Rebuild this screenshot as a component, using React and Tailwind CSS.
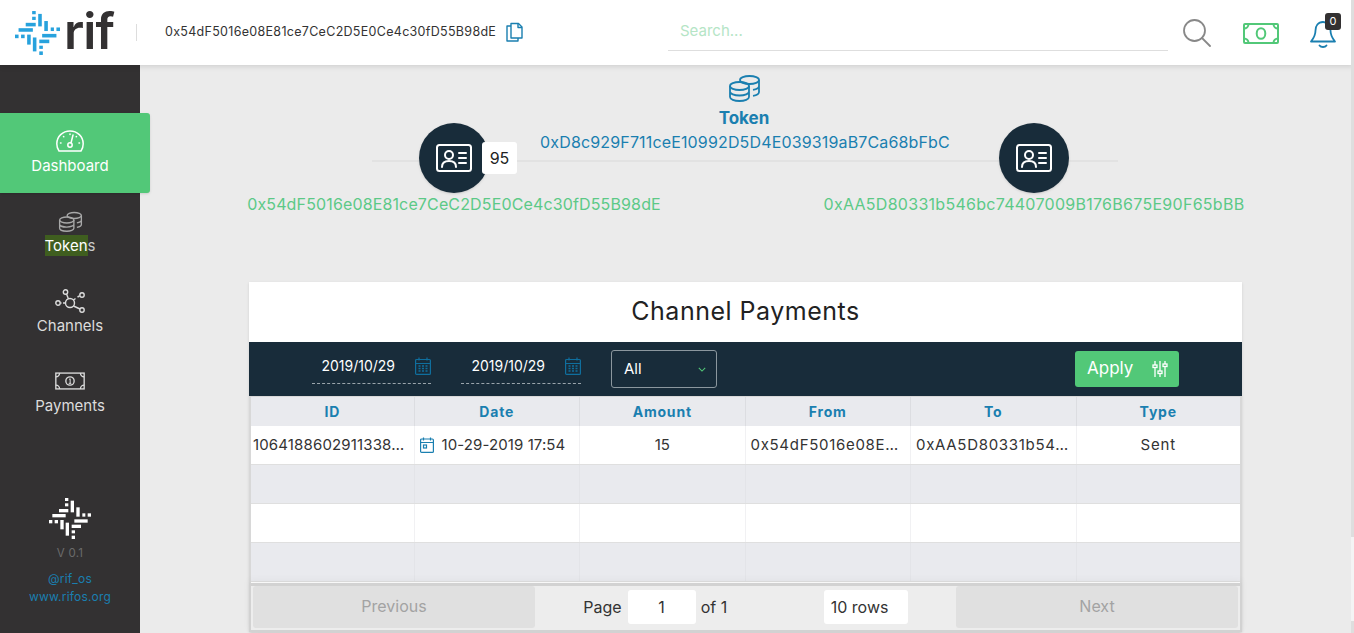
const ADDR_A = "0x54dF5016e08E81ce7CeC2D5E0Ce4c30fD55B98dE";
const ADDR_B = "0xAA5D80331b546bc74407009B176B675E90F65bBB";
const TOKEN = "0xD8c929F711ceE10992D5D4E039319aB7Ca68bFbC";

function RifMark({ className }) {
  const bars = [
    [195, 52, 10, 9], [195, 68, 10, 9], [177, 85, 28, 10], [212, 60, 10, 35],
    [229, 80, 10, 28], [247, 98, 9, 10], [263, 98, 10, 10], [157, 100, 40, 10],
    [223, 116, 40, 10], [147, 118, 10, 10], [164, 118, 10, 10], [181, 118, 10, 28],
    [197, 126, 10, 39], [215, 132, 28, 10], [215, 149, 10, 9], [215, 165, 10, 10],
  ];
  return (
    <svg viewBox="147 52 126 123" className={className} fill="currentColor">
      {bars.map(([x, y, w, h]) => (
        <rect key={`${x}-${y}`} x={x} y={y} width={w} height={h} />
      ))}
    </svg>
  );
}

function IdCard() {
  return (
    <svg viewBox="0 0 36 28" className="w-[36px] h-[28px]" fill="none" stroke="#fff" strokeWidth="2" strokeLinecap="round">
      <rect x="1" y="1" width="34" height="26" rx="2.5" />
      <circle cx="13" cy="11" r="4" />
      <path d="M6 23c0-4 3-6 7-6s7 2 7 6" />
      <path d="M23 9h7M23 14h7M23 19h7" />
    </svg>
  );
}

function Coins({ className }) {
  return (
    <svg viewBox="0 0 32 28" className={className} fill="none" stroke="currentColor" strokeWidth="1.8">
      <ellipse cx="21" cy="6" rx="9.5" ry="4" />
      <path d="M30.5 6v12c0 1.8-2.5 3.2-6 3.8M30.5 12c0 1.8-2.5 3.2-6 3.8" />
      <ellipse cx="11" cy="12" rx="9.5" ry="4" />
      <path d="M1.5 12v11c0 2.2 4.2 4 9.5 4s9.5-1.8 9.5-4V12M1.5 17.5c0 2.2 4.2 4 9.5 4s9.5-1.8 9.5-4" />
    </svg>
  );
}

function Gauge({ className }) {
  return (
    <svg viewBox="0 0 28 22" className={className} fill="none" stroke="currentColor" strokeWidth="1.5" strokeLinecap="round">
      <path d="M3 21h22c1.5-2 2.2-4.500 2.2-7.200C27.200 6.500 21.300 1 14 1S.8 6.500.8 13.800C.8 16.500 1.500 19 3 21z" />
      <circle cx="14" cy="15" r="2.2" />
      <path d="M15 13l2-8M14 4v.5M7.500 6.500l.3.3M20.500 6.500l-.3.3M4.500 13h.5M23 13h.5" />
    </svg>
  );
}

function Network({ className }) {
  return (
    <svg viewBox="0 0 30 24" className={className} fill="none" stroke="currentColor" strokeWidth="1.4">
      <circle cx="15" cy="14" r="4.5" />
      <circle cx="10.5" cy="3" r="2.2" />
      <circle cx="27" cy="6" r="2.2" />
      <circle cx="3" cy="14" r="2.2" />
      <circle cx="27" cy="21" r="2.2" />
      <path d="M11.500 5l2 5M18.500 11l2-1.500M22.500 8l2-1M5.500 14h1M8 14h2.500M18.500 17l6.500 3" />
    </svg>
  );
}

function Cash({ className, digit }) {
  return (
    <svg viewBox="0 0 36 21" className={className} fill="none" stroke="currentColor" strokeWidth={digit ? 1.6 : 2}>
      <rect x="1" y="1" width="34" height="19" rx={digit ? 0 : 1} />
      <path d="M1 5.500a4.500 4.500 0 0 0 4.500-4.500M30.500 1A4.500 4.500 0 0 0 35 5.500M1 15.500A4.500 4.500 0 0 1 5.500 20M30.500 20a4.500 4.500 0 0 1 4.500-4.500" />
      {digit ? (
        <>
          <circle cx="18" cy="10.500" r="5" />
          <path d="M17 8.500l1.200-.7v5.500M16.500 13.300h3" strokeWidth="1.2" />
        </>
      ) : (
        <ellipse cx="18" cy="10.500" rx="4.300" ry="5.300" />
      )}
    </svg>
  );
}

function CalendarGrid() {
  return (
    <svg viewBox="0 0 16 18" className="w-[16px] h-[18px] text-[#0f6f9e]" fill="none" stroke="currentColor" strokeWidth="1.2">
      <rect x=".6" y="2.500" width="14.800" height="14.900" rx="1" />
      <path d="M.6 6.500h14.800M4 .5v3M12 .5v3" />
      <path d="M3.500 9h2M7 9h2M10.500 9h2M3.500 11.500h2M7 11.500h2M10.500 11.500h2M3.500 14h2M7 14h2M10.500 14h2" strokeWidth="1.5" />
    </svg>
  );
}

function NavItem({ icon, active, label, dim }) {
  return (
    <div className={`h-[80px] flex flex-col items-center pt-[15px] ${active ? "w-[150px] bg-[#52c878] rounded-r-[3px] text-white shadow-sm" : "w-[140px] text-[#dcdcdc]"}`}>
      <div className={`h-[26px] flex items-center justify-center ${active ? "w-[140px] self-start" : ""} ${dim ? "text-[#a8a8a8]" : ""}`}>{icon}</div>
      <div className={`mt-[1px] text-[15px] leading-[22px] ${active ? "w-[140px] self-start text-center" : ""}`}>{label}</div>
    </div>
  );
}

function DateField({ width }) {
  return (
    <div className={`${width} h-[30px] flex items-center justify-end gap-[20px] border-b border-dashed border-[#9aa5ac] pb-[6px] text-[14px] text-white`}>
      <span>2019/10/29</span>
      <CalendarGrid />
    </div>
  );
}

function NodeColumn({ address, badge, spacing }) {
  return (
    <div className="w-[420px] flex flex-col items-center pt-[48px]">
      <div className="relative w-[70px] h-[70px] rounded-full bg-[#182c3a] flex items-center justify-center shadow-sm">
        <IdCard />
        {badge ? (
          <div className="absolute left-[63px] top-[19px] w-[35px] h-[32px] rounded-[3px] bg-white flex items-center justify-center text-[16px] text-[#222]">
            {badge}
          </div>
        ) : null}
      </div>
      <div className={`text-[#5cc987] text-[16px] leading-[22px] ${spacing} whitespace-nowrap`}>{address}</div>
    </div>
  );
}

const COLS = "grid grid-cols-[163.5px_165.5px_165.5px_165.5px_165.5px_1fr]";

function App() {
  const emptyRows = ["bg-[#e9eaee]", "bg-white", "bg-[#e9eaee]"];

  return (
    <div className="relative h-[633px] w-[1354px] overflow-hidden bg-[#ebebeb] font-['Inter',sans-serif] text-[#333]">
      <header className="relative z-20 h-[65px] bg-white shadow-[0_1px_6px_rgba(0,0,0,0.14)] flex items-center">
        <div className="w-[136px] h-full flex items-center pl-[15px] gap-[4px]">
          <RifMark className="w-[45px] h-[46px] text-[#27a2dd]" />
          <span className="text-[50px] leading-[50px] font-semibold text-[#333132] -mt-[4px] tracking-[-1px]">rif</span>
        </div>
        <div className="w-px h-[17px] bg-[#dddddd]" />
        <div className="ml-[28px] w-[331px] text-[12.5px] tracking-[0.3px] text-[#333] whitespace-nowrap">{ADDR_A}</div>
        <svg viewBox="0 0 17 20" className="ml-[10px] -mt-[1px] w-[17px] h-[20px] text-[#1a7fb0]" fill="none" stroke="currentColor" strokeWidth="1.4" strokeLinejoin="round">
          <path d="M5 16V1.500h7.500L16 5v11z" />
          <path d="M12 1.500V5.500h4" />
          <path d="M5 4H1v15h11v-3" />
        </svg>
        <div className="ml-[145px] w-[500px] h-[38px] pl-[12px] border-b border-[#dedede] flex items-center text-[15px] text-[#b5e5c6] mt-[-1px]">Search...</div>
        <svg viewBox="0 0 28 28" className="ml-[15px] w-[28px] h-[28px] text-[#888]" fill="none" stroke="currentColor" strokeWidth="1.8" strokeLinecap="round">
          <circle cx="11.500" cy="11.500" r="10.500" />
          <path d="M19 19l8 8" />
        </svg>
        <Cash className="ml-[32px] mt-[1px] w-[36px] h-[21px] text-[#52c878]" />
        <div className="relative ml-[31px] w-[26px] h-[30px] mt-[2px]">
          <svg viewBox="0 0 26 30" className="w-[26px] h-[30px] text-[#1a7fb0]" fill="none" stroke="currentColor" strokeWidth="1.8" strokeLinejoin="round" strokeLinecap="round">
            <path d="M13 3c-5 0-7.500 4-7.500 8.500 0 5-2 8-4.500 11h24c-2.500-3-4.500-6-4.500-11C20.500 7 18 3 13 3z" />
            <path d="M9.500 26.500c1.500 2 5.500 2 7 0" />
          </svg>
          <div className="absolute left-[15px] -top-[6px] w-[16px] h-[17px] rounded-[3px] bg-[#333132] text-white text-[11px] flex items-center justify-center">0</div>
        </div>
      </header>

      <div className="flex h-[568px]">
        <aside className="relative z-10 w-[140px] shrink-0 bg-[#333132] flex flex-col">
          <nav className="pt-[48px]">
            <NavItem active label="Dashboard" icon={<Gauge className="w-[28px] h-[22px]" />} />
            <NavItem dim label={<><span className="inline-block leading-[21px] bg-[#3f5e1f] text-white">Token</span><span className="text-[#c9c9c9]">s</span></>} icon={<Coins className="w-[25px] h-[21px]" />} />
            <NavItem label="Channels" icon={<Network className="w-[30px] h-[24px]" />} />
            <NavItem label="Payments" icon={<Cash digit className="w-[30px] h-[18px]" />} />
          </nav>
          <div className="mt-auto pb-[29px] flex flex-col items-center">
            <RifMark className="w-[42px] h-[41px] text-white" />
            <div className="mt-[7px] text-[11.5px] leading-[14px] text-[#6b6b6b] tracking-[0.3px]">V 0.1</div>
            <div className="mt-[12px] text-[12px] leading-[14px] text-[#1a7fb0] tracking-[0.2px]">@rif_os</div>
            <div className="mt-[4px] text-[12px] leading-[14px] text-[#1a7fb0] tracking-[0.2px]">www.rifos.org</div>
          </div>
        </aside>

        <main className="flex-1 min-w-0 pl-[104px] flex flex-col">
          <div className="relative w-[1000px] h-[217px] flex items-start pt-[10px]">
            <div className="absolute left-[128px] top-[95px] w-[746px] h-[2px] bg-[#e2e2e2]" />
            <div className="relative"><NodeColumn address={ADDR_A} badge="95" spacing="tracking-[0.14px]" /></div>
            <div className="relative w-[160px] flex flex-col items-center text-[#1a7fb0]">
              <Coins className="w-[33px] h-[28px] -mt-[1px]" />
              <div className="mt-[4px] font-bold text-[17px] leading-[24px]">Token</div>
              <div className="mt-[1px] pl-[2px] text-[16px] leading-[22px] tracking-[0.15px] whitespace-nowrap">{TOKEN}</div>
            </div>
            <div className="relative"><NodeColumn address={ADDR_B} spacing="tracking-[0.28px]" /></div>
          </div>

          <section className="ml-[5px] w-[993px] h-[350px] flex flex-col bg-white shadow-sm">
            <h2 className="h-[60px] shrink-0 flex items-center justify-center text-[25px] font-normal text-[#222] tracking-[0.5px]">Channel Payments</h2>
            <div className="h-[54px] shrink-0 bg-[#182c3a] flex items-center px-[63px]">
              <DateField width="w-[119px]" />
              <div className="w-[30px]" />
              <DateField width="w-[120px]" />
              <div className="ml-[30px] w-[106px] h-[38px] rounded-[3px] border border-[#8b979e] flex items-center justify-between pl-[12px] pr-[10px] text-[15px] text-white">
                <span>All</span>
                <svg viewBox="0 0 10 6" className="w-[8px] h-[5px] text-[#52c878]" fill="none" stroke="currentColor" strokeWidth="1.3"><path d="M1 1l4 4 4-4" /></svg>
              </div>
              <div className="ml-auto w-[104px] h-[36px] rounded-[3px] bg-[#52c878] flex items-center justify-between pl-[12px] pr-[11px] text-white text-[17px]">
                <span>Apply</span>
                <svg viewBox="0 0 16 18" className="w-[16px] h-[18px]" fill="none" stroke="currentColor" strokeWidth="1.3">
                  <path d="M3 1v16M8 1v16M13 1v16" />
                  <rect x="1" y="5" width="4" height="2.5" fill="#52c878" />
                  <rect x="6" y="11" width="4" height="2.5" fill="#52c878" />
                  <rect x="11" y="4" width="4" height="2.5" fill="#52c878" />
                </svg>
              </div>
            </div>

            <div className="flex-1 min-h-0 flex flex-col border-x-2 border-t border-[#d8d8d8] bg-white text-[15px] text-[#333]">
              <div className={`h-[29px] shrink-0 ${COLS} bg-[#e9eaee] text-[14px] font-bold tracking-[0.8px] text-[#1a7fb0]`}>
                {["ID", "Date", "Amount", "From", "To", "Type"].map((h) => (
                  <div key={h} className="flex items-center justify-center border-r border-[#dcdde1] last:border-r-0">{h}</div>
                ))}
              </div>
              <div className={`h-[39px] shrink-0 ${COLS} items-stretch bg-white border-b border-[#dfdfdf] whitespace-nowrap`}>
                <div className="flex items-center pl-[2px] tracking-[0.15px] border-r border-[#f1f1f3]">1064188602911338…</div>
                <div className="flex items-center pl-[5px] border-r border-[#f1f1f3]">
                  <svg viewBox="0 0 14 16" className="w-[14px] h-[16px] mr-[8px] shrink-0 text-[#1a7fb0]" fill="none" stroke="currentColor" strokeWidth="1.2">
                    <rect x=".6" y="2" width="12.800" height="13.400" rx="1" />
                    <path d="M.6 5.500h12.800M3.500 .5v3M10.500 .5v3" />
                    <rect x="3.500" y="8" width="3" height="3" />
                  </svg>
                  <span className="tracking-[0.1px]">10-29-2019 17:54</span>
                </div>
                <div className="flex items-center justify-center border-r border-[#f1f1f3]">15</div>
                <div className="flex items-center pl-[5px] tracking-[0.7px] border-r border-[#f1f1f3]">0x54dF5016e08E…</div>
                <div className="flex items-center pl-[5px] tracking-[0.7px] border-r border-[#f1f1f3]">0xAA5D80331b54…</div>
                <div className="flex items-center justify-center tracking-[0.8px]">Sent</div>
              </div>
              {emptyRows.map((bg, i) => (
                <div key={i} className={`h-[39px] shrink-0 ${COLS} ${bg} border-b border-[#dfdfdf]`}>
                  {[0, 1, 2, 3, 4, 5].map((c) => (
                    <div key={c} className={`border-r last:border-r-0 ${i === 1 ? "border-[#f1f1f3]" : "border-[#e3e4e8]"}`} />
                  ))}
                </div>
              ))}
            </div>

            <div className="relative h-[49px] shrink-0 bg-[#ededed] border-2 border-t-[3px] border-[#d2d2d2] shadow-[0_-3px_8px_rgba(0,0,0,0.04)] flex items-start px-[2px] text-[16px] text-[#333]">
              <div className="w-[282px] h-[42px] pb-[2px] rounded-[3px] bg-[#e0e0e0] flex items-center justify-center text-[#a3a3a3]">Previous</div>
              <div className="flex-1 pt-[4px] flex items-center justify-around">
                <div className="flex items-center">
                  <span>Page</span>
                  <div className="ml-[6px] w-[68px] h-[34px] rounded-[3px] bg-white flex items-center justify-center">1</div>
                  <span className="ml-[5px]">of 1</span>
                </div>
                <div className="w-[84px] h-[34px] rounded-[3px] bg-white flex items-center pl-[7px]">10 rows</div>
              </div>
              <div className="w-[282px] h-[42px] pb-[2px] rounded-[3px] bg-[#e0e0e0] flex items-center justify-center text-[#a3a3a3]">Next</div>
            </div>
          </section>
        </main>
      </div>

      <div className="absolute right-0 top-0 z-30 w-[3px] h-[633px] bg-[#f4f4f4] flex flex-col justify-between">
        <div className="h-[537px] bg-[#dedede]" />
        <div className="h-[12px] bg-[#dedede]" />
      </div>
    </div>
  );
}

export default App;
